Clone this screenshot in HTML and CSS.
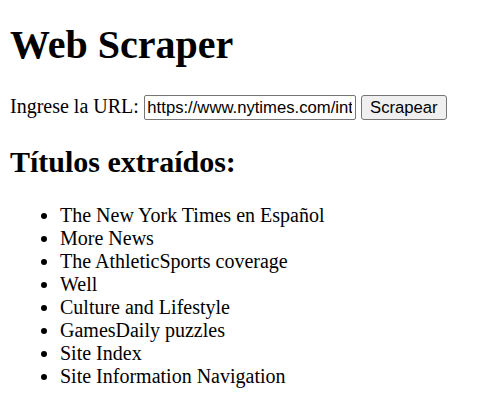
FILE: index.html
```html
<!DOCTYPE html>
<html lang="es">
<head>
<meta charset="utf-8">
<title>Web Scraper</title>
<link rel="stylesheet" href="styles.css">
</head>
<body>
<h1 class="title">Web Scraper</h1>
<form class="form">
<label for="url">Ingrese la URL:</label>
<input class="url-input" type="text" id="url" name="url" value="https://www.nytimes.com/international/">
<button class="btn" type="submit">Scrapear</button>
</form>
<h2 class="subtitle">Títulos extraídos:</h2>
<ul class="list">
<li>The New York Times en Español</li>
<li>More News</li>
<li>The AthleticSports coverage</li>
<li>Well</li>
<li>Culture and Lifestyle</li>
<li>GamesDaily puzzles</li>
<li>Site Index</li>
<li>Site Information Navigation</li>
</ul>
</body>
</html>
```

FILE: styles.css
```css
body {
  font-family: "Liberation Serif", serif;
  font-size: 20px;
  margin: 10px;
  color: #000;
  background: #fff;
}
.title {
  font-size: 2em;
  margin: 11px 0 26.8px;
}
.subtitle {
  font-size: 1.5em;
  margin: 0.83em 0;
}
.list {
  margin: 1em 0;
  padding-left: 50px;
}
.url-input,
.btn {
  font-family: "Liberation Sans", sans-serif;
  font-size: 16.67px;
  color: #000;
  box-sizing: border-box;
  vertical-align: baseline;
}
.url-input {
  width: 212px;
  height: 25px;
  padding: 1px 2.5px;
  border: 1px solid #767676;
  border-radius: 2px;
  background: #fff;
}
.btn {
  width: 86px;
  height: 25px;
  padding: 1px 7.5px;
  border: 1px solid #767676;
  border-radius: 3px;
  background: #efefef;
}
```
